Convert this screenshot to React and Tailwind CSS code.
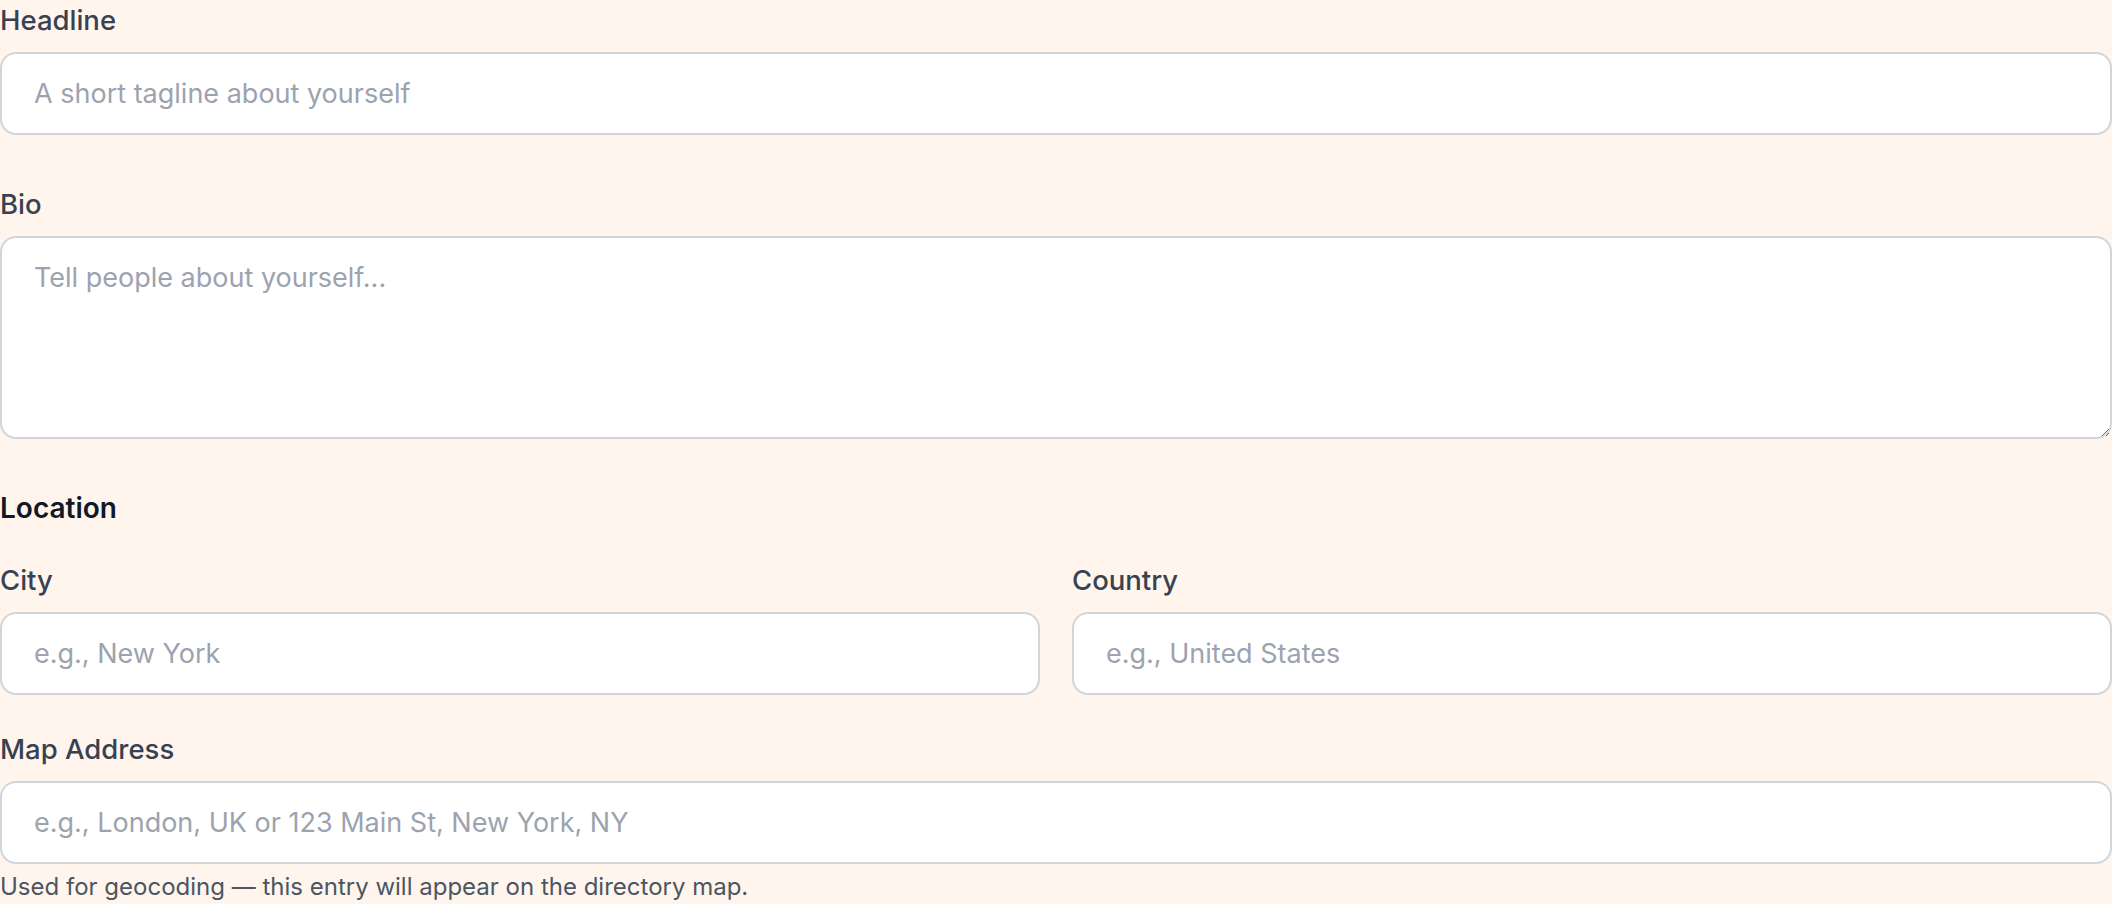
import React from 'react';

const inputClass =
  "block w-full h-[83px] px-[32px] bg-white border-2 border-[#d1d5db] rounded-[16px] text-[27px] text-[#111827] placeholder:text-[#9ca3af] outline-none";

function Label({ children, htmlFor }) {
  return (
    <label htmlFor={htmlFor} className="block text-[27.5px] leading-[40px] font-medium text-[#374151] mb-[12px]">
      {children}
    </label>
  );
}

export default function App() {
  return (
    <div className="w-[2112px] h-[904px] bg-[#fff5ec] font-['Inter',sans-serif] overflow-hidden">
      <div>
        <Label htmlFor="headline">Headline</Label>
        <input id="headline" type="text" placeholder="A short tagline about yourself" className={inputClass} />
      </div>

      <div className="mt-[49px]">
        <Label htmlFor="bio">Bio</Label>
        <textarea
          id="bio"
          placeholder="Tell people about yourself..."
          className="block w-full h-[203px] px-[32px] py-[20px] bg-white border-2 border-[#d1d5db] rounded-[16px] text-[27px] leading-[40px] text-[#111827] placeholder:text-[#9ca3af] outline-none"
        />
      </div>

      <h3 className="mt-[47px] text-[28px] leading-[44px] font-semibold text-[#111827]">Location</h3>

      <div className="mt-[30px] grid grid-cols-2 gap-8">
        <div>
          <Label htmlFor="city">City</Label>
          <input id="city" type="text" placeholder="e.g., New York" className={inputClass} />
        </div>
        <div>
          <Label htmlFor="country">Country</Label>
          <input id="country" type="text" placeholder="e.g., United States" className={inputClass} />
        </div>
      </div>

      <div className="mt-[34px]">
        <Label htmlFor="map">Map Address</Label>
        <input id="map" type="text" placeholder="e.g., London, UK or 123 Main St, New York, NY" className={inputClass} />
        <p className="mt-[7px] text-[24px] leading-[32px] text-[#4b5563]">
          Used for geocoding — this entry will appear on the directory map.
        </p>
      </div>
    </div>
  );
}
